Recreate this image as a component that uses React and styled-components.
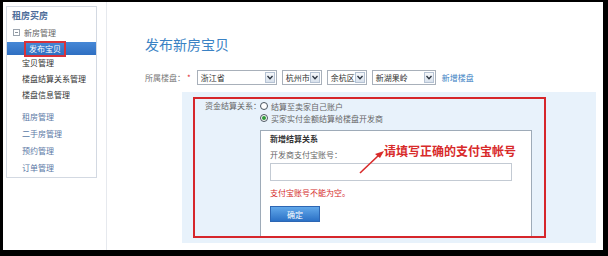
import React from "react";
import styled, { createGlobalStyle } from "styled-components";

const GlobalStyle = createGlobalStyle`
  html, body { margin: 0; padding: 0; background: #000; }
  body { font-family: "Noto Sans CJK SC", "Noto Sans", sans-serif; }
  * { box-sizing: border-box; }
`;

const Frame = styled.div`
  width: 608px;
  height: 256px;
  background: #000;
  padding: 2px 5px 6px 3px;
`;

const Page = styled.div`
  display: flex;
  height: 100%;
  background: #fff;
`;

const SideCol = styled.aside`
  width: 104px;
  flex-shrink: 0;
  border-right: 1px solid #e6e9ee;
  padding: 4px 0 0 3px;
`;

const SideBox = styled.nav`
  width: 91px;
  border: 1px solid #d3d9e2;
  padding-bottom: 1px;
`;

const SideHeader = styled.div`
  height: 17px;
  line-height: 17px;
  padding-left: 5px;
  font-size: 9px;
  font-weight: bold;
  color: #4d6c99;
`;

const GroupTitle = styled.div`
  height: 17px;
  display: flex;
  align-items: center;
  gap: 4px;
  padding-left: 6px;
  font-size: 8px;
  color: #666;
`;

const Collapse = styled.span`
  width: 7px;
  height: 7px;
  border: 1px solid #9aa3ad;
  position: relative;
  &::after {
    content: "";
    position: absolute;
    left: 1px;
    right: 1px;
    top: 2px;
    height: 1px;
    background: #8a939d;
  }
`;

const ActiveRow = styled.div`
  margin-top: 1px;
  height: 13px;
  display: flex;
  align-items: center;
  padding-left: 17px;
  background: linear-gradient(#4688d6, #2f6fc2);
`;

const Marked = styled.span`
  display: inline-block;
  border: 2px solid #d8323a;
  padding: 0 3px;
  margin: -2px 0;
  line-height: 12px;
  font-size: 8px;
  color: #fff;
`;

const SideItem = styled.div`
  height: ${(p) => (p.$alt ? 17 : 16)}px;
  line-height: ${(p) => (p.$alt ? 17 : 16)}px;
  padding-left: 15px;
  font-size: 8px;
  white-space: nowrap;
  color: ${(p) => (p.$alt ? "#5b79a6" : "#333")};
  margin-top: ${(p) => (p.$gap ? 5 : 0)}px;
`;

const Main = styled.main`
  flex: 1;
  padding: 33px 0 0 38px;
`;

const Title = styled.h1`
  margin: 0;
  font-size: 14px;
  line-height: 18px;
  font-weight: normal;
  color: #3a82c4;
`;

const FormRow = styled.div`
  margin-top: 17px;
  height: 15px;
  display: flex;
  align-items: center;
  font-size: 8px;
  white-space: nowrap;
`;

const RowLabel = styled.span`
  color: #777;
`;

const Star = styled.span`
  color: #e0282e;
  margin: 0 6px 0 2px;
`;

const Select = styled.div`
  width: ${(p) => p.$w}px;
  flex-shrink: 0;
  height: 15px;
  margin-right: 5px;
  border: 1px solid #a8b0ba;
  background: #fff;
  display: flex;
  align-items: center;
  justify-content: space-between;
  padding-left: 3px;
  color: #333;
  white-space: nowrap;
`;

const Arrow = styled.span`
  width: 10px;
  height: 11px;
  flex-shrink: 0;
  margin-right: 1px;
  border: 1px solid #b5c2d3;
  background: linear-gradient(#f6f8fb, #d8e1ec);
  display: flex;
  align-items: center;
  justify-content: center;
`;

const Link = styled.span`
  margin-left: 1px;
  color: #3b7fc4;
`;

const Panel = styled.section`
  margin: 7px 0 0 37px;
  width: 414px;
  height: 151px;
  background: #e8f2fb;
  padding: 5px 0 0 11px;
`;

const RedBox = styled.div`
  position: relative;
  width: 353px;
  height: 141px;
  border: 2px solid #d6262b;
  display: flex;
  font-size: 8px;
  white-space: nowrap;
`;

const FieldLabel = styled.div`
  width: 65px;
  flex-shrink: 0;
  padding: 1px 0 0 10px;
  line-height: 12px;
  color: #666;
`;

const FieldValue = styled.div`
  flex: 1;
  margin-right: 12px;
  padding-top: 1px;
  display: flex;
  flex-direction: column;
`;

const RadioLine = styled.div`
  height: 12px;
  display: flex;
  align-items: center;
  gap: 3px;
  color: #666;
`;

const Radio = styled.span`
  width: 8px;
  height: 8px;
  flex-shrink: 0;
  border-radius: 50%;
  border: 1px solid #4a5560;
  background: #fff;
  display: flex;
  align-items: center;
  justify-content: center;
  &::after {
    content: "";
    width: 4px;
    height: 4px;
    border-radius: 50%;
    background: ${(p) => (p.$checked ? "#2f9a3a" : "transparent")};
  }
`;

const SubBox = styled.div`
  flex: 1;
  margin-top: 6px;
  border: 1px solid #9eabb8;
  border-bottom: none;
  background: #fff;
  padding: 2px 0 0 9px;
`;

const SubTitle = styled.div`
  line-height: 12px;
  font-weight: bold;
  color: #333;
`;

const FieldHint = styled.div`
  margin-top: 4px;
  line-height: 12px;
  color: #666;
`;

const TextInput = styled.div`
  margin-top: 2px;
  width: 242px;
  height: 18px;
  border: 1px solid #c3cad3;
  background: #fff;
`;

const ErrorText = styled.div`
  margin-top: 6px;
  line-height: 12px;
  color: #d42a2a;
`;

const Button = styled.div`
  margin-top: 7px;
  width: 50px;
  height: 16px;
  border: 1px solid #2d66b3;
  background: linear-gradient(#62a8ea, #2b71c6);
  color: #fff;
  display: flex;
  align-items: center;
  justify-content: center;
`;

const Note = styled.div`
  position: absolute;
  left: 189px;
  top: 44px;
  font-size: 12px;
  line-height: 16px;
  font-weight: bold;
  color: #d82a2a;
  white-space: nowrap;
`;

const NoteArrow = styled.svg`
  position: absolute;
  left: 160px;
  top: 48px;
`;

const Chevron = () => (
  <svg width="6" height="5" viewBox="0 0 6 5">
    <path d="M0.5 1 L3 3.8 L5.5 1" fill="none" stroke="#2b3440" strokeWidth="1.3" />
  </svg>
);

const selects = [
  { w: 80, t: "浙江省" },
  { w: 40, t: "杭州市" },
  { w: 40, t: "余杭区" },
  { w: 64, t: "新湖果岭" },
];

export default function App() {
  return (
    <>
      <GlobalStyle />
      <Frame>
        <Page>
          <SideCol>
            <SideBox>
              <SideHeader>租房买房</SideHeader>
              <GroupTitle>
                <Collapse />
                新房管理
              </GroupTitle>
              <ActiveRow>
                <Marked>发布宝贝</Marked>
              </ActiveRow>
              <SideItem>宝贝管理</SideItem>
              <SideItem>楼盘结算关系管理</SideItem>
              <SideItem>楼盘信息管理</SideItem>
              <SideItem $alt $gap>租房管理</SideItem>
              <SideItem $alt>二手房管理</SideItem>
              <SideItem $alt>预约管理</SideItem>
              <SideItem $alt>订单管理</SideItem>
            </SideBox>
          </SideCol>
          <Main>
            <Title>发布新房宝贝</Title>
            <FormRow>
              <RowLabel>所属楼盘：</RowLabel>
              <Star>*</Star>
              {selects.map((s) => (
                <Select key={s.t} $w={s.w}>
                  {s.t}
                  <Arrow>
                    <Chevron />
                  </Arrow>
                </Select>
              ))}
              <Link>新增楼盘</Link>
            </FormRow>
            <Panel>
              <RedBox>
                <FieldLabel>资金结算关系：</FieldLabel>
                <FieldValue>
                  <RadioLine>
                    <Radio />
                    结算至卖家自己账户
                  </RadioLine>
                  <RadioLine>
                    <Radio $checked />
                    买家实付金额结算给楼盘开发商
                  </RadioLine>
                  <SubBox>
                    <SubTitle>新增结算关系</SubTitle>
                    <FieldHint>开发商支付宝账号：</FieldHint>
                    <TextInput />
                    <ErrorText>支付宝账号不能为空。</ErrorText>
                    <Button>确定</Button>
                  </SubBox>
                </FieldValue>
                <NoteArrow width="32" height="32" viewBox="0 0 32 32">
                  <line x1="5" y1="26" x2="24" y2="8" stroke="#d82a2a" strokeWidth="1.6" />
                  <polygon points="29,4 20,7 25,11" fill="#d82a2a" />
                </NoteArrow>
                <Note>请填写正确的支付宝帐号</Note>
              </RedBox>
            </Panel>
          </Main>
        </Page>
      </Frame>
    </>
  );
}
